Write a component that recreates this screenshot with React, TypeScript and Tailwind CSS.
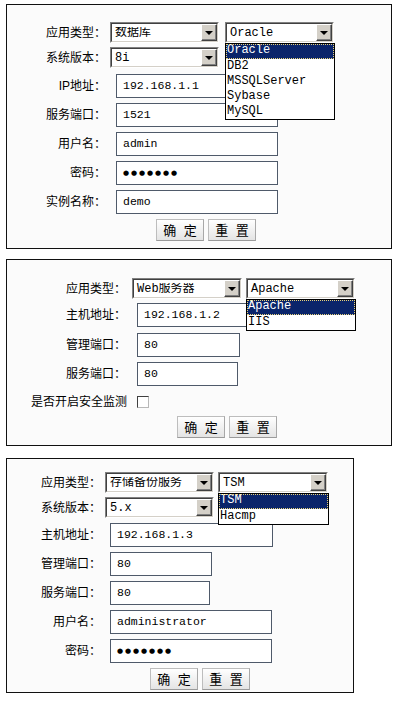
import React from 'react';

const cjk = "font-['Liberation_Sans','Noto_Sans_CJK_SC',sans-serif]";
const mono = "font-['Liberation_Mono','Noto_Sans_CJK_SC',monospace]";

function Label({ text, className }: { text: string; className: string }) {
  return (
    <div className={`shrink-0 text-right text-[12px] leading-none text-black ${cjk} ${className}`}>{text}</div>
  );
}

function DropList({ items }: { items: string[] }) {
  return (
    <div className={`absolute left-0 top-full z-10 w-[calc(100%+1px)] border border-black bg-white text-[12px] ${mono}`}>
      {items.map((item, i) => (
        <div
          key={item}
          className={
            i === 0
              ? 'h-[15px] bg-[#0a246a] pl-[1px] leading-[13px] text-white outline-1 outline-dotted -outline-offset-1 outline-[#e8d27a]'
              : 'h-[15px] pl-[1px] leading-[15px] text-black'
          }
        >
          {item}
        </div>
      ))}
    </div>
  );
}

function Select({ value, className, list }: { value: string; className: string; list?: string[] }) {
  return (
    <div className={`relative h-[21px] shrink-0 ${className}`}>
      <div className="flex h-full border border-t-[#808080] border-l-[#808080] border-b-white border-r-white">
        <div className="flex flex-1 items-center border border-t-[#404040] border-l-[#404040] border-b-[#d4d0c8] border-r-[#d4d0c8] bg-white">
          <span className={`flex-1 truncate pl-[3px] text-[12px] leading-none text-black ${mono}`}>{value}</span>
          <span className="flex h-full w-[16px] items-center justify-center border border-t-white border-l-white border-b-[#404040] border-r-[#404040] bg-[#d4d0c8] shadow-[inset_-1px_-1px_0_#808080]">
            <span className="h-0 w-0 border-x-[4px] border-t-[4px] border-x-transparent border-t-black" />
          </span>
        </div>
      </div>
      {list && <DropList items={list} />}
    </div>
  );
}

function TextBox({ value, className, secret }: { value: string; className: string; secret?: boolean }) {
  return (
    <div className={`flex h-[24px] shrink-0 items-center border border-[#4f5a6a] bg-white pl-[6px] ${className}`}>
      {secret ? (
        <span className="font-['DejaVu_Sans',sans-serif] text-[7px] leading-none tracking-[1.9px] text-black">{value}</span>
      ) : (
        <span className={`text-[11.5px] leading-none text-black ${mono}`}>{value}</span>
      )}
    </div>
  );
}

function Buttons({ className }: { className: string }) {
  return (
    <div className={`flex h-[22px] gap-[4px] ${className}`}>
      {['确 定', '重 置'].map((t) => (
        <button
          key={t}
          className={`h-full w-[48px] border border-[#bdbdbd] border-b-[#9a9a9a] border-r-[#a8a8a8] bg-gradient-to-b from-white to-[#e4e4e4] pl-[2px] text-[13px] leading-none tracking-[2px] text-black ${cjk}`}
        >
          {t}
        </button>
      ))}
    </div>
  );
}

export default function App() {
  return (
    <div className="min-h-[705px] w-[414px] bg-white pt-[4px]">
      {/* 数据库 */}
      <div className="ml-[6px] w-[386px] border border-[#111] bg-[#fbfbfb] pt-[17px] pb-[7px]">
        <div className="flex items-center">
          <Label text="应用类型：" className="w-[99px]" />
          <Select value="数据库" className="ml-[4px] w-[109px]" />
          <Select value="Oracle" className="z-10 ml-[6px] w-[109px]" list={['Oracle', 'DB2', 'MSSQLServer', 'Sybase', 'MySQL']} />
        </div>
        <div className="mt-[4px] flex items-center">
          <Label text="系统版本：" className="w-[99px]" />
          <Select value="8i" className="ml-[4px] w-[109px]" />
        </div>
        <div className="mt-[6px] flex items-center">
          <Label text="IP地址：" className="w-[99px]" />
          <TextBox value="192.168.1.1" className="ml-[10px] w-[162px]" />
        </div>
        <div className="mt-[5px] flex items-center">
          <Label text="服务端口：" className="w-[99px]" />
          <TextBox value="1521" className="ml-[10px] w-[162px]" />
        </div>
        <div className="mt-[5px] flex items-center">
          <Label text="用户名：" className="w-[99px]" />
          <TextBox value="admin" className="ml-[10px] w-[162px]" />
        </div>
        <div className="mt-[5px] flex items-center">
          <Label text="密码：" className="w-[99px]" />
          <TextBox value="●●●●●●●" secret className="ml-[10px] w-[162px]" />
        </div>
        <div className="mt-[5px] flex items-center">
          <Label text="实例名称：" className="w-[99px]" />
          <TextBox value="demo" className="ml-[10px] w-[162px]" />
        </div>
        <Buttons className="mt-[5px] ml-[149px]" />
      </div>

      {/* Web服务器 */}
      <div className="mt-[10px] ml-[6px] w-[386px] border border-[#111] bg-[#fbfbfb] pt-[18px] pb-[7px]">
        <div className="flex items-center">
          <Label text="应用类型：" className="w-[119px]" />
          <Select value="Web服务器" className="ml-[6px] w-[110px]" />
          <Select value="Apache" className="z-10 ml-[4px] w-[109px]" list={['Apache', 'IIS']} />
        </div>
        <div className="mt-[4px] flex items-center">
          <Label text="主机地址：" className="w-[119px]" />
          <TextBox value="192.168.1.2" className="ml-[11px] w-[162px]" />
        </div>
        <div className="mt-[6px] flex items-center">
          <Label text="管理端口：" className="w-[119px]" />
          <TextBox value="80" className="ml-[11px] w-[103px]" />
        </div>
        <div className="mt-[5px] flex items-center">
          <Label text="服务端口：" className="w-[119px]" />
          <TextBox value="80" className="ml-[11px] w-[101px]" />
        </div>
        <div className="mt-[8px] flex h-[16px] items-center">
          <Label text="是否开启安全监测" className="w-[120px]" />
          <span className="ml-[10px] h-[12px] w-[12px] border border-t-[#404040] border-l-[#404040] border-b-[#b8b8b8] border-r-[#b8b8b8] bg-white" />
        </div>
        <Buttons className="mt-[6px] ml-[170px] h-[21px]" />
      </div>

      {/* 存储备份服务 */}
      <div className="mt-[12px] ml-[6px] w-[348px] border border-[#111] bg-[#fbfbfb] pt-[13px] pb-[2px]">
        <div className="flex items-center">
          <Label text="应用类型：" className="w-[94px]" />
          <Select value="存储备份服务" className="ml-[4px] w-[109px]" />
          <Select value="TSM" className="z-10 ml-[4px] w-[110px]" list={['TSM', 'Hacmp']} />
        </div>
        <div className="mt-[4px] flex items-center">
          <Label text="系统版本：" className="w-[94px]" />
          <Select value="5.x" className="ml-[4px] w-[109px]" />
        </div>
        <div className="mt-[5px] flex items-center">
          <Label text="主机地址：" className="w-[94px]" />
          <TextBox value="192.168.1.3" className="ml-[9px] w-[163px]" />
        </div>
        <div className="mt-[5px] flex items-center">
          <Label text="管理端口：" className="w-[94px]" />
          <TextBox value="80" className="ml-[9px] w-[102px]" />
        </div>
        <div className="mt-[5px] flex items-center">
          <Label text="服务端口：" className="w-[94px]" />
          <TextBox value="80" className="ml-[9px] w-[100px]" />
        </div>
        <div className="mt-[5px] flex items-center">
          <Label text="用户名：" className="w-[94px]" />
          <TextBox value="administrator" className="ml-[9px] w-[162px]" />
        </div>
        <div className="mt-[5px] flex items-center">
          <Label text="密码：" className="w-[94px]" />
          <TextBox value="●●●●●●●" secret className="ml-[9px] w-[162px]" />
        </div>
        <Buttons className="mt-[5px] ml-[143px]" />
      </div>
    </div>
  );
}
